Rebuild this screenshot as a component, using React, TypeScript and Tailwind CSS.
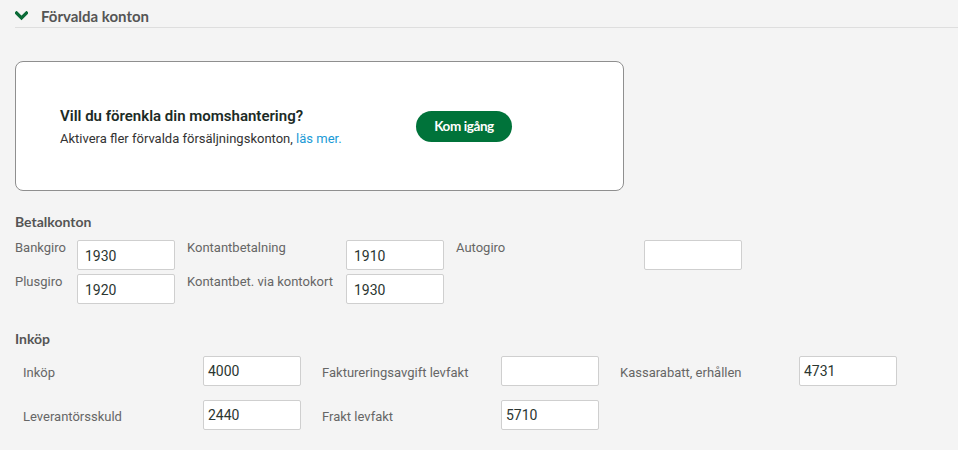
import React from "react";

const roboto = { fontFamily: "Roboto, 'Liberation Sans', sans-serif" };
const lato = { fontFamily: "Lato, 'Noto Sans', sans-serif" };

function Box({ value, pl = "pl-[7px]", pt = "pt-[3px]" }: { value: string; pl?: string; pt?: string }) {
  return (
    <div
      className={`w-[98px] h-[30px] shrink-0 bg-white border border-[#cfcfcf] rounded-[2px] flex items-center ${pl} ${pt} text-[14px] text-[#2b3631]`}
    >
      {value}
    </div>
  );
}

export default function App() {
  return (
    <div className="w-[958px] h-[450px] bg-[#f4f4f4] overflow-hidden" style={roboto}>
      {/* Header */}
      <div className="ml-[15px] pt-[7px] h-[28px] border-b border-[#dedede] flex items-start gap-[13px]">
        <svg width="13" height="10" viewBox="0 0 13 10" className="mt-[4px]">
          <path d="M1.5 2 L6.5 7 L11.5 2" fill="none" stroke="#0b6b37" strokeWidth="3.2" strokeLinecap="square" />
        </svg>
        <span className="text-[15px] font-bold text-[#555] leading-[18px]" style={lato}>
          Förvalda konton
        </span>
      </div>

      {/* Card */}
      <div className="ml-[15px] mt-[33px] w-[609px] h-[130px] bg-white border border-[#8f8f8f] rounded-[8px] flex items-center pl-[44px]">
        <div className="w-[356px] pt-[2px]">
          <div className="text-[15px] font-semibold text-[#1c2b26] leading-[18px]">Vill du förenkla din momshantering?</div>
          <div className="mt-[6px] text-[13px] text-[#333] leading-[16px]">
            Aktivera fler förvalda försäljningskonton, <span className="text-[#1a9ad6]">läs mer.</span>
          </div>
        </div>
        <div
          className="w-[96px] h-[31px] rounded-full bg-[#00733a] text-white text-[13.5px] font-bold flex items-center justify-center tracking-[-0.4px]"
          style={lato}
        >
          Kom igång
        </div>
      </div>

      {/* Betalkonton */}
      <div className="ml-[15px] mt-[23px] text-[14px] font-bold text-[#555] leading-[16px]" style={lato}>
        Betalkonton
      </div>
      <div className="ml-[15px] mt-[10px] flex flex-col gap-[4px] text-[13px] text-[#666]">
        <div className="flex items-start">
          <div className="w-[62px] leading-[16px]">Bankgiro</div>
          <Box value="1930" />
          <div className="ml-[12px] w-[159px] leading-[16px]">Kontantbetalning</div>
          <Box value="1910" />
          <div className="ml-[12px] w-[188px] leading-[16px]">Autogiro</div>
          <Box value="" />
        </div>
        <div className="flex items-start">
          <div className="w-[62px] leading-[16px]">Plusgiro</div>
          <Box value="1920" />
          <div className="ml-[12px] w-[159px] leading-[16px]">Kontantbet. via kontokort</div>
          <Box value="1930" />
        </div>
      </div>

      {/* Inköp */}
      <div className="ml-[15px] mt-[27px] text-[14px] font-bold text-[#555] leading-[16px]" style={lato}>
        Inköp
      </div>
      <div className="ml-[23px] mt-[9px] flex flex-col gap-[14px] text-[13px] text-[#666]">
        <div className="flex items-center">
          <div className="w-[180px] pt-[3px]">Inköp</div>
          <Box value="4000" pl="pl-[4px]" pt="pt-0" />
          <div className="ml-[21px] w-[179px] pt-[3px]">Faktureringsavgift levfakt</div>
          <Box value="" pl="pl-[4px]" pt="pt-0" />
          <div className="ml-[21px] w-[179px] pt-[3px]">Kassarabatt, erhållen</div>
          <Box value="4731" pl="pl-[4px]" pt="pt-0" />
        </div>
        <div className="flex items-center">
          <div className="w-[180px] pt-[3px]">Leverantörsskuld</div>
          <Box value="2440" pl="pl-[4px]" pt="pt-0" />
          <div className="ml-[21px] w-[179px] pt-[3px]">Frakt levfakt</div>
          <Box value="5710" pl="pl-[4px]" pt="pt-0" />
        </div>
      </div>
    </div>
  );
}
